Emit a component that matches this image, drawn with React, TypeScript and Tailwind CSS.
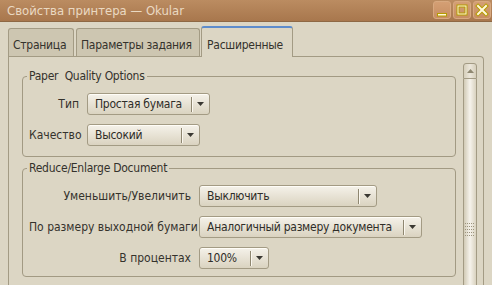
import React from 'react';

const tabs = ['Страница', 'Параметры задания', 'Расширенные'];

function TitleButton({ kind }: { kind: 'min' | 'max' | 'close' }) {
  return (
    <div className="flex h-[18px] w-[18px] items-center justify-center rounded-[3px] border border-[#d8a980] bg-gradient-to-b from-[#d49f74] to-[#c78e62]">
      <svg width="16" height="16" viewBox="0 0 16 16">
        {kind === 'min' && (
          <rect x="3.5" y="11.5" width="9" height="2.5" fill="#fff7da" stroke="#b59b00" strokeWidth="1" />
        )}
        {kind === 'max' && (
          <>
            <rect x="4" y="4" width="8" height="8" fill="none" stroke="#b59b00" strokeWidth="3" />
            <rect x="4" y="4" width="8" height="8" fill="none" stroke="#fff7da" strokeWidth="1" />
          </>
        )}
        {kind === 'close' && (
          <>
            <path d="M4 4 L12 12 M12 4 L4 12" stroke="#b59b00" strokeWidth="4" strokeLinecap="square" />
            <path d="M4 4 L12 12 M12 4 L4 12" stroke="#fff7da" strokeWidth="2" strokeLinecap="square" />
          </>
        )}
      </svg>
    </div>
  );
}

function Combo({ value, className }: { value: string; className: string }) {
  return (
    <div
      className={`flex h-[22px] items-center rounded-[3px] border border-[#a39b84] bg-gradient-to-b from-[#f5f2ea] to-[#dad3c0] shadow-[inset_0_1px_0_#fffdf7] ${className}`}
    >
      <span className="flex-1 truncate pl-[7px] tracking-[-0.25px] text-[#2f2d28]">{value}</span>
      <div className="h-[15px] w-px bg-[#8f8771] shadow-[1px_0_0_#fbf8f0]" />
      <div className="flex w-[17px] items-center justify-center">
        <svg width="7" height="4" viewBox="0 0 7 4">
          <path d="M0 0 L7 0 L3.5 4 Z" fill="#3a3832" />
        </svg>
      </div>
    </div>
  );
}

function GroupBox({ title, children }: { title: string; children: React.ReactNode }) {
  return (
    <fieldset className="w-[434px] rounded-[4px] border border-[#a29a83] pl-[6px] pt-[10px]">
      <legend className="-ml-[2px] whitespace-pre px-[2px] leading-[14px] tracking-[-0.25px] text-[#34322c]">{title}</legend>
      {children}
    </fieldset>
  );
}

export default function App() {
  return (
    <div className="flex h-[285px] w-[492px] flex-col overflow-hidden bg-[#dcd6c4] font-['DejaVu_Sans_Condensed','DejaVu_Sans',sans-serif] text-[12px] text-[#34322c]">
      {/* title bar */}
      <div className="flex h-[22px] shrink-0 items-center justify-between border-b border-[#8e6844] bg-gradient-to-b from-[#bb8c61] to-[#a8774d] pl-[7px] pr-[1px]">
        <span className="text-[13px] text-[#ead9c2]">Свойства принтера — Okular</span>
        <div className="flex gap-[2px] pb-[2px]">
          <TitleButton kind="min" />
          <TitleButton kind="max" />
          <TitleButton kind="close" />
        </div>
      </div>

      {/* tabs */}
      <div className="flex items-end pl-[8px] pt-[4px] tracking-[-0.25px]">
        <div className="h-[28px] w-[66px] rounded-t-[3px] border border-b-0 border-[#a39b84] bg-[#cdc6b1] pl-[4px] pt-[9px] leading-[14px]">
          {tabs[0]}
        </div>
        <div className="ml-[2px] h-[28px] w-[124px] rounded-t-[3px] border border-b-0 border-[#a39b84] bg-[#cdc6b1] pl-[4px] pt-[9px] leading-[14px]">
          {tabs[1]}
        </div>
        <div className="relative z-10 -mb-px ml-[1px] h-[31px] w-[92px] rounded-t-[3px] border border-b-0 border-t-2 border-[#a39b84] border-t-[#5d8ccc] bg-[#dcd6c4] pl-[5px] pt-[10px] leading-[14px]">
          {tabs[2]}
        </div>
      </div>

      {/* tab panel */}
      <div className="ml-[8px] flex w-[476px] flex-1 rounded-tr-[4px] border border-b-0 border-[#a39b84]">
        <div className="flex flex-col gap-[4px] pl-[13px] pt-[12px]">
          <GroupBox title="Paper  Quality Options">
            <div className="grid grid-cols-[50px_max-content] items-center gap-x-[8px] gap-y-[9px] pb-[10px]">
              <span className="text-right">Тип</span>
              <Combo value="Простая бумага" className="w-[123px]" />
              <span className="text-right">Качество</span>
              <Combo value="Высокий" className="w-[113px]" />
            </div>
          </GroupBox>
          <GroupBox title="Reduce/Enlarge Document">
            <div className="grid grid-cols-[162px_max-content] items-center gap-x-[8px] gap-y-[9px] pb-[7px]">
              <span className="text-right">Уменьшить/Увеличить</span>
              <Combo value="Выключить" className="w-[178px]" />
              <span className="whitespace-nowrap text-right">По размеру выходной бумаги</span>
              <Combo value="Аналогичный размеру документа" className="w-[223px]" />
              <span className="text-right">В процентах</span>
              <Combo value="100%" className="w-[70px]" />
            </div>
          </GroupBox>
        </div>

        {/* scrollbar */}
        <div className="ml-[7px] mt-[6px] flex w-[14px] flex-col">
          <div className="flex h-[16px] items-center justify-center rounded-t-[3px] border border-[#a39b84] bg-gradient-to-r from-[#d6cfbb] via-[#ece7db] to-[#d6cfbb]">
            <svg width="7" height="4" viewBox="0 0 7 4">
              <path d="M3.5 0 L7 4 L0 4 Z" fill="#8f8871" />
            </svg>
          </div>
          <div className="flex flex-1 justify-center border-x border-[#a39b84] bg-gradient-to-r from-[#d2cbb6] via-[#f6f3ec] to-[#d9d2bf] pt-[144px]">
            <svg width="10" height="14" viewBox="0 0 10 14">
              {[0, 1, 2, 3, 4].map(r =>
                [0, 1, 2, 3, 4].map(c => (
                  <rect key={`${r}-${c}`} x={c * 2} y={r * 3} width="1" height="1" fill="#9c947d" />
                ))
              )}
            </svg>
          </div>
        </div>
      </div>
    </div>
  );
}
